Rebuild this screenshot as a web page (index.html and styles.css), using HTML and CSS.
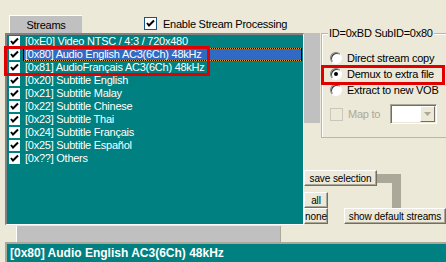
FILE: index.html
```html
<!DOCTYPE html>
<html lang="en">

<head>
    <meta charset="UTF-8">
    <title>Streams</title>
    <link rel="stylesheet" href="styles.css">
</head>

<body>
    <div class="dialog">
        <!--onglet + case a cocher du haut-->
        <div class="top">
            <div class="tab">Streams</div>
            <div class="enable">
                <span class="xpcheck">
                    <svg width="11" height="11" viewBox="0 0 11 11"><path d="M2 5 L4 7.5 L9 2.5" fill="none" stroke="#000" stroke-width="2"/></svg>
                </span>
                <span>Enable Stream Processing</span>
            </div>
        </div>

        <div class="middle">
            <!--liste des flux-->
            <div class="list">
                <div class="row"><span class="cb"><svg width="11" height="11" viewBox="0 0 11 11"><path d="M2 5 L4 7.5 L9 2.5" fill="none" stroke="#000" stroke-width="2"/></svg></span><span class="txt">[0xE0] Video NTSC / 4:3 / 720x480</span></div>
                <div class="row sel"><span class="cb"><svg width="11" height="11" viewBox="0 0 11 11"><path d="M2 5 L4 7.5 L9 2.5" fill="none" stroke="#000" stroke-width="2"/></svg></span><span class="txt">[0x80] Audio English AC3(6Ch) 48kHz</span></div>
                <div class="row"><span class="cb"><svg width="11" height="11" viewBox="0 0 11 11"><path d="M2 5 L4 7.5 L9 2.5" fill="none" stroke="#000" stroke-width="2"/></svg></span><span class="txt">[0x81] AudioFrançais AC3(6Ch) 48kHz</span></div>
                <div class="row"><span class="cb"><svg width="11" height="11" viewBox="0 0 11 11"><path d="M2 5 L4 7.5 L9 2.5" fill="none" stroke="#000" stroke-width="2"/></svg></span><span class="txt">[0x20] Subtitle English</span></div>
                <div class="row"><span class="cb"><svg width="11" height="11" viewBox="0 0 11 11"><path d="M2 5 L4 7.5 L9 2.5" fill="none" stroke="#000" stroke-width="2"/></svg></span><span class="txt">[0x21] Subtitle Malay</span></div>
                <div class="row"><span class="cb"><svg width="11" height="11" viewBox="0 0 11 11"><path d="M2 5 L4 7.5 L9 2.5" fill="none" stroke="#000" stroke-width="2"/></svg></span><span class="txt">[0x22] Subtitle Chinese</span></div>
                <div class="row"><span class="cb"><svg width="11" height="11" viewBox="0 0 11 11"><path d="M2 5 L4 7.5 L9 2.5" fill="none" stroke="#000" stroke-width="2"/></svg></span><span class="txt">[0x23] Subtitle Thai</span></div>
                <div class="row"><span class="cb"><svg width="11" height="11" viewBox="0 0 11 11"><path d="M2 5 L4 7.5 L9 2.5" fill="none" stroke="#000" stroke-width="2"/></svg></span><span class="txt">[0x24] Subtitle Français</span></div>
                <div class="row"><span class="cb"><svg width="11" height="11" viewBox="0 0 11 11"><path d="M2 5 L4 7.5 L9 2.5" fill="none" stroke="#000" stroke-width="2"/></svg></span><span class="txt">[0x25] Subtitle Español</span></div>
                <div class="row"><span class="cb"><svg width="11" height="11" viewBox="0 0 11 11"><path d="M2 5 L4 7.5 L9 2.5" fill="none" stroke="#000" stroke-width="2"/></svg></span><span class="txt">[0x??] Others</span></div>
            </div>

            <!--options du flux selectionne-->
            <div class="side">
                <div class="side-top">
                    <div class="strip"></div>
                    <div class="group">
                        <span class="legend">ID=0xBD SubID=0x80</span>
                        <div class="opts">
                            <div class="opt"><span class="radio"></span>Direct stream copy</div>
                            <div class="opt"><span class="radio on"></span>Demux to extra file</div>
                            <div class="opt"><span class="radio"></span>Extract to new VOB</div>
                        </div>
                        <div class="map">
                            <span class="dis-check"></span>
                            <span class="map-label">Map to</span>
                            <div class="combo">
                                <span class="combo-field"></span>
                                <span class="combo-btn">
                                    <svg width="7" height="4" viewBox="0 0 7 4"><path d="M0 0 H7 L3.5 4 Z" fill="#ACA899"/></svg>
                                </span>
                            </div>
                        </div>
                    </div>
                </div>
                <div class="actions">
                    <div class="btn save">save selection</div>
                    <div class="pick">
                        <div class="pick-col">
                            <div class="btn small">all</div>
                            <div class="btn small">none</div>
                        </div>
                        <div class="btn show">show default streams</div>
                    </div>
                    <div class="link link-h"></div>
                    <div class="link link-v"></div>
                </div>
            </div>
        </div>

        <div class="hbar"></div>
        <div class="status">[0x80] Audio English AC3(6Ch) 48kHz</div>

        <!--cadres rouges-->
        <div class="mark mark-list"></div>
        <div class="mark mark-demux"></div>
    </div>
</body>

</html>
```

FILE: styles.css
```css
* {
    box-sizing: border-box;
}

body {
    margin: 0;
    background-color: #ECE9D8;
    font-family: "Liberation Sans", Arial, sans-serif;
    font-size: 11px;
    color: #000;
    overflow: hidden;
}

.dialog {
    position: relative;
    width: 446px;
    height: 262px;
    overflow: hidden;
    white-space: nowrap;
    letter-spacing: -0.25px;
}

.top {
    height: 33px;
    display: flex;
    align-items: flex-start;
}

.tab {
    margin: 15px 0 0 9px;
    width: 73px;
    height: 18px;
    background-color: #C0C0C0;
    border-top: 1px solid #fff;
    border-left: 1px solid #fff;
    display: flex;
    align-items: center;
    justify-content: center;
}

.enable {
    margin: 17px 0 0 62px;
    display: flex;
    align-items: center;
    gap: 6px;
}

.xpcheck {
    width: 13px;
    height: 13px;
    border: 1px solid #1C5180;
    background-color: #fff;
    display: flex;
}

.middle {
    display: flex;
    height: 193px;
}

.list {
    flex: none;
    margin-left: 5px;
    width: 299px;
    height: 192px;
    background-color: #008080;
    border-style: solid;
    border-width: 2px 1px 1px 2px;
    border-color: #808080 #fff #fff #808080;
    color: #fff;
}

.row {
    height: 13px;
    display: flex;
    align-items: center;
}

.cb {
    width: 11px;
    height: 11px;
    margin-left: 2px;
    background-color: #fff;
    flex: none;
    display: flex;
}

.txt {
    margin-left: 3px;
    padding: 0 2px;
    height: 13px;
    line-height: 13px;
}

.sel .txt {
    flex: 1;
    margin-right: 1px;
    padding-left: 1px;
    background-color: #316AC5;
    border: 1px solid transparent;
    border-image: repeating-linear-gradient(90deg, #000 0 1px, #E8A040 1px 2px) 1;
    line-height: 11px;
}

.side {
    flex: none;
    width: 142px;
    display: flex;
    flex-direction: column;
}

.side-top {
    display: flex;
    align-items: flex-start;
}

.strip {
    flex: none;
    width: 16px;
    height: 90px;
    background-color: #C0C0C0;
}

.group {
    flex: none;
    margin-left: 1px;
    width: 130px;
    height: 105px;
    border: 1px solid #B9B6A6;
    box-shadow: inset 1px 1px #fff;
    display: flex;
    flex-direction: column;
}

.legend {
    align-self: flex-start;
    margin: -7px 0 0 6px;
    padding: 0 1px;
    line-height: 13px;
    background-color: #ECE9D8;
}

.opts {
    margin-top: 10px;
}

.opt {
    height: 16px;
    display: flex;
    align-items: center;
    gap: 5px;
    padding-left: 8px;
}

.radio {
    flex: none;
    width: 12px;
    height: 12px;
    border-radius: 50%;
    background-color: #fff;
    border: 1px solid;
    border-color: #808080 #fff #fff #808080;
    box-shadow: inset 1px 1px #404040;
    display: flex;
    align-items: center;
    justify-content: center;
}

.radio.on::after {
    content: "";
    width: 4px;
    height: 4px;
    border-radius: 50%;
    background-color: #000;
}

.map {
    margin-top: 6px;
    height: 20px;
    display: flex;
    align-items: center;
    padding-left: 8px;
}

.dis-check {
    flex: none;
    width: 13px;
    height: 13px;
    border: 1px solid #C9C7BA;
}

.map-label {
    margin-left: 5px;
    color: #ACA899;
}

.combo {
    flex: none;
    margin-left: 10px;
    width: 47px;
    height: 20px;
    display: flex;
    border: 1px solid;
    border-color: #ACA899 #fff #fff #ACA899;
    box-shadow: inset 1px 1px #716F64;
    padding: 1px;
}

.combo-field {
    flex: 1;
    background-color: #fff;
}

.combo-btn {
    width: 15px;
    background-color: #ECE9D8;
    border: 1px solid;
    border-color: #fff #716F64 #716F64 #fff;
    display: flex;
    align-items: center;
    justify-content: center;
}

.actions {
    position: relative;
    margin-top: 32px;
    height: 54px;
}

.btn {
    background-color: #ECE9D8;
    border: 1px solid;
    border-color: #fff #716F64 #716F64 #fff;
    box-shadow: inset -1px -1px #ACA899;
    display: flex;
    align-items: center;
    justify-content: center;
    height: 16px;
    font-size: 10px;
    letter-spacing: -0.1px;
}

.save {
    width: 73px;
}

.pick {
    margin-top: 6px;
    display: flex;
    align-items: flex-end;
}

.small {
    width: 24px;
}

.show {
    margin-left: 16px;
    width: 103px;
}

.link {
    position: absolute;
    background-color: #ACA899;
}

.link-h {
    left: 73px;
    top: 4px;
    width: 24px;
    height: 9px;
}

.link-v {
    left: 88px;
    top: 4px;
    width: 9px;
    height: 34px;
}

.hbar {
    margin: 0 0 0 16px;
    width: 265px;
    height: 16px;
    background-color: #C0C0C0;
    border-left: 1px solid #fff;
    border-right: 1px solid #ACA899;
}

.status {
    margin-left: 5px;
    height: 20px;
    background-color: #008080;
    border-top: 2px solid #ACA899;
    border-left: 2px solid #ACA899;
    color: #fff;
    font-weight: bold;
    font-size: 12px;
    line-height: 18px;
    padding-left: 3px;
    letter-spacing: 0;
}

.mark {
    position: absolute;
    border: 3px solid #E00000;
}

.mark-list {
    left: 4px;
    top: 46px;
    width: 206px;
    height: 30px;
}

.mark-demux {
    left: 321px;
    top: 65px;
    width: 124px;
    height: 20px;
}
```
